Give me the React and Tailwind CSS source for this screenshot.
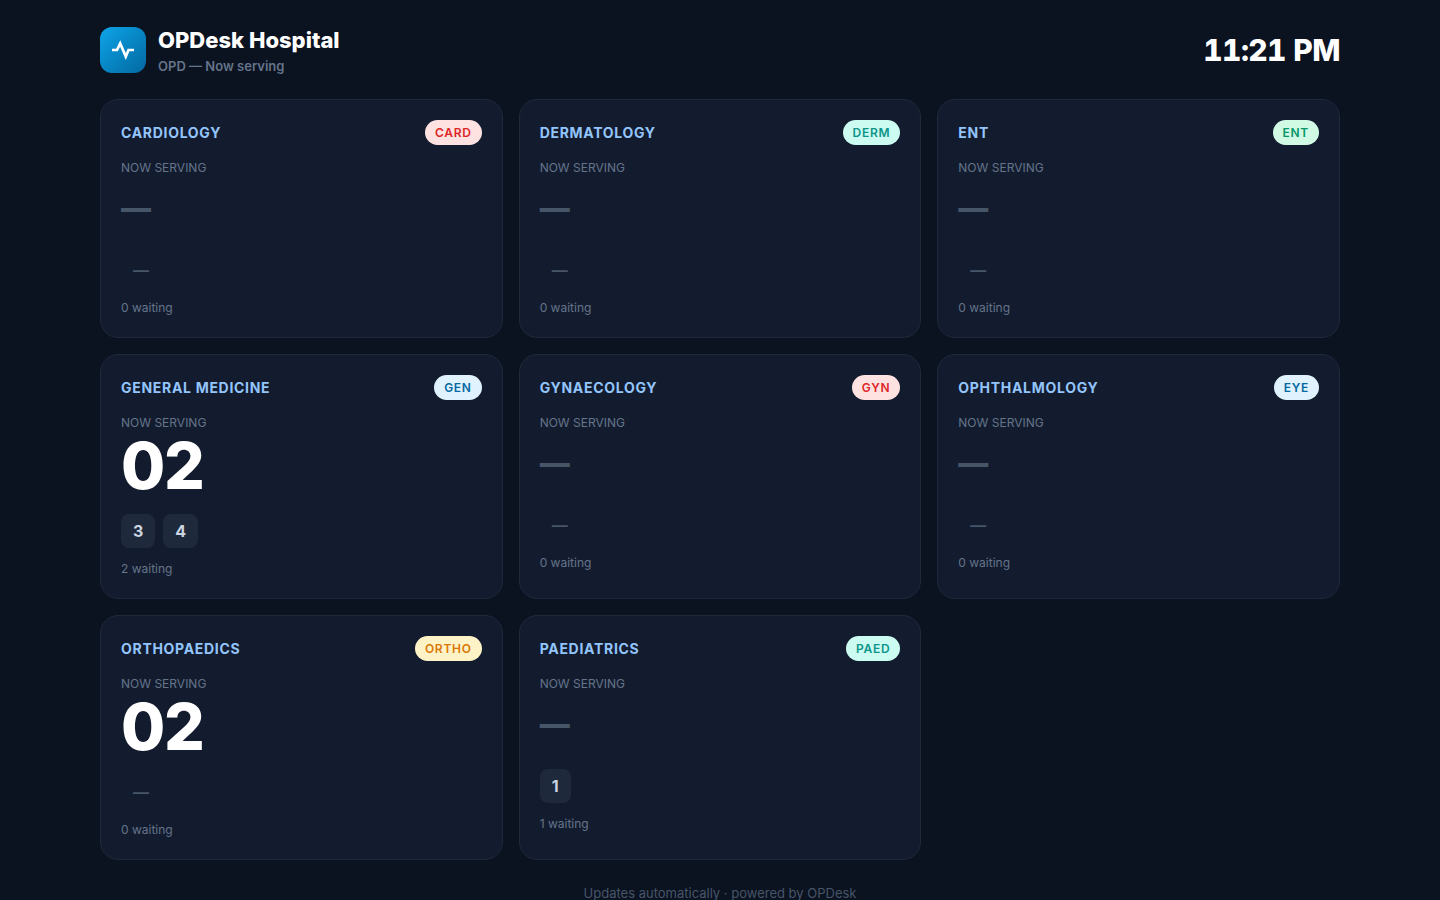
import React from "react";

const departments = [
  { name: "Cardiology", code: "CARD", badge: "bg-[#fee2e2] text-[#dc2626]", serving: null, next: [] },
  { name: "Dermatology", code: "DERM", badge: "bg-[#ccfbf1] text-[#0d9488]", serving: null, next: [] },
  { name: "ENT", code: "ENT", badge: "bg-[#d1fae5] text-[#059669]", serving: null, next: [] },
  { name: "General Medicine", code: "GEN", badge: "bg-[#e0f2fe] text-[#0369a1]", serving: "02", next: [3, 4] },
  { name: "Gynaecology", code: "GYN", badge: "bg-[#fee2e2] text-[#dc2626]", serving: null, next: [] },
  { name: "Ophthalmology", code: "EYE", badge: "bg-[#e0f2fe] text-[#0369a1]", serving: null, next: [] },
  { name: "Orthopaedics", code: "ORTHO", badge: "bg-[#fef3c7] text-[#d97706]", serving: "02", next: [] },
  { name: "Paediatrics", code: "PAED", badge: "bg-[#ccfbf1] text-[#0d9488]", serving: null, next: [1] },
];

const Logo = () => (
  <div className="flex size-[46px] items-center justify-center rounded-xl bg-linear-135 from-[#0ea5e9] to-[#0369a1]">
    <svg
      className="size-6"
      viewBox="0 0 24 24"
      fill="none"
      stroke="white"
      strokeWidth="2.7"
      aria-hidden="true"
    >
      <path d="M1 12h5l3.200-6.500 5.600 13L17.500 12H23" />
    </svg>
  </div>
);

const DepartmentCard = ({ department }) => {
  const { name, code, badge, serving, next } = department;

  return (
    <section className="rounded-[18px] border border-[#1e293b] bg-[#131c2e] p-5">
      <div className="mb-3.5 flex items-center justify-between">
        <h2 className="text-sm font-bold uppercase tracking-wider text-[#93c5fd]">
          {name}
        </h2>
        <span
          className={`rounded-full px-2.5 text-xs leading-[25px] font-semibold tracking-[0.06em] ${badge}`}
        >
          {code}
        </span>
      </div>

      <p className="mb-0.5 text-xs leading-[18px] text-[#64748b] uppercase">
        Now serving
      </p>
      {serving ? (
        <p className="text-[64px] leading-16 font-extrabold tracking-[-0.02em] text-white">
          {serving}
        </p>
      ) : (
        <p className="text-[30px] leading-[58px] font-extrabold text-[#475569]">
          —
        </p>
      )}

      {/* Tokens up next */}
      <ul className="mt-4 mb-3 flex gap-2">
        {next.length > 0 ? (
          next.map((token) => (
            <li
              key={token}
              className="rounded-lg bg-[#1e293b] px-3 text-base leading-[34px] font-bold text-[#cbd5e1]"
            >
              {token}
            </li>
          ))
        ) : (
          <li className="px-3 text-base leading-[34px] font-bold text-[#475569]">
            —
          </li>
        )}
      </ul>

      <p className="text-xs leading-[18px] text-[#64748b]">
        {next.length} waiting
      </p>
    </section>
  );
};

const App = () => {
  return (
    <div className="min-h-screen bg-[#0b1220] p-6 font-['Inter',sans-serif]">
      <div className="mx-auto max-w-[1240px]">
        <header className="mb-[23px] flex items-center justify-between">
          <div className="flex items-center gap-3">
            <Logo />
            <div>
              <h1 className="text-[22px] leading-[33px] font-extrabold text-white">
                OPDesk Hospital
              </h1>
              <p className="text-[13px] leading-[19px] font-semibold text-[#64748b]">
                OPD — Now serving
              </p>
            </div>
          </div>
          <time className="text-[30px] leading-9 font-extrabold tracking-[-0.02em] text-white tabular-nums">
            11:21 PM
          </time>
        </header>

        <main className="grid grid-cols-3 gap-4">
          {departments.map((department) => (
            <DepartmentCard key={department.code} department={department} />
          ))}
        </main>

        <footer className="mt-6 text-center text-[13px] leading-[18px] text-[#475569]">
          Updates automatically · powered by OPDesk
        </footer>
      </div>
    </div>
  );
};

export default App;
